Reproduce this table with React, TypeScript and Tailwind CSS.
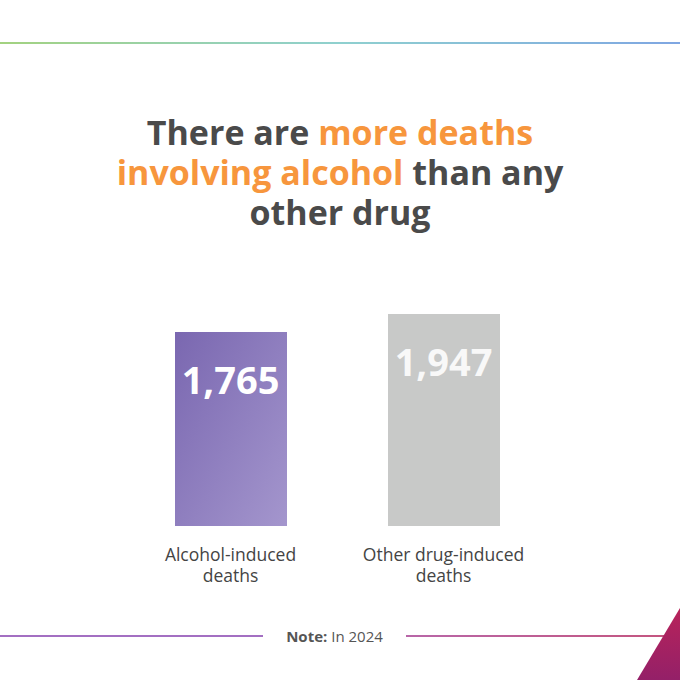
export default function App() {
  return (
    <div
      className="relative h-[680px] w-[680px] overflow-hidden bg-white"
      style={{ fontFamily: '"Open Sans", "Liberation Sans", sans-serif' }}
    >
      {/* top rule */}
      <div className="pt-[42px]">
        <div className="h-[2px] w-full bg-gradient-to-r from-[#a3d27f] via-[#8fd0cf] to-[#7fa6e2]" />
      </div>

      {/* headline */}
      <h1 className="mx-auto mt-[68px] w-[480px] text-center text-[34px] font-bold leading-[40px] text-[#4a4a4a]">
        There are <span className="text-[#f7963d]">more deaths involving alcohol</span> than any
        other drug
      </h1>

      {/* bars */}
      <div className="mt-[82px] flex items-end justify-center gap-[101px] pr-[6px]">
        <Bar
          value="1,765"
          label={["Alcohol-induced", "deaths"]}
          height="h-[194px]"
          fill="bg-gradient-to-br from-[#7a67b0] to-[#a496cd]"
          text="text-white"
        />
        <Bar
          value="1,947"
          label={["Other drug-induced", "deaths"]}
          height="h-[212px]"
          fill="bg-[#c8c9c8]"
          text="text-[#f8f8f8]"
        />
      </div>

      {/* note footer */}
      <div className="mt-[39px] flex items-center">
        <div className="h-[2px] w-[263px] bg-[#a36fc2]" />
        <p className="flex-1 text-center text-[15px] text-[#555]">
          <span className="font-bold">Note:</span> In 2024
        </p>
        <div className="mr-[12px] h-[2px] w-[262px] bg-gradient-to-r from-[#b866a8] to-[#c4557f]" />
      </div>

      {/* corner triangle */}
      <svg className="absolute bottom-0 right-0" width="44" height="72" viewBox="0 0 44 72">
        <defs>
          <linearGradient id="tri" x1="0" y1="0" x2="0" y2="1">
            <stop offset="0" stopColor="#b8235a" />
            <stop offset="1" stopColor="#942068" />
          </linearGradient>
        </defs>
        <polygon points="44,0 44,72 1,72" fill="url(#tri)" />
      </svg>
    </div>
  );
}

function Bar({
  value,
  label,
  height,
  fill,
  text,
}: {
  value: string;
  label: string[];
  height: string;
  fill: string;
  text: string;
}) {
  return (
    <div className="flex w-[112px] flex-col items-center">
      <div className={`flex w-[112px] justify-center pt-[23px] ${height} ${fill}`}>
        <span className={`text-[38px] font-bold leading-[48px] ${text}`}>{value}</span>
      </div>
      <div className="mt-[18px] whitespace-nowrap text-center text-[17.5px] leading-[21px] text-[#444]">
        {label.map((l) => (
          <div key={l}>{l}</div>
        ))}
      </div>
    </div>
  );
}
